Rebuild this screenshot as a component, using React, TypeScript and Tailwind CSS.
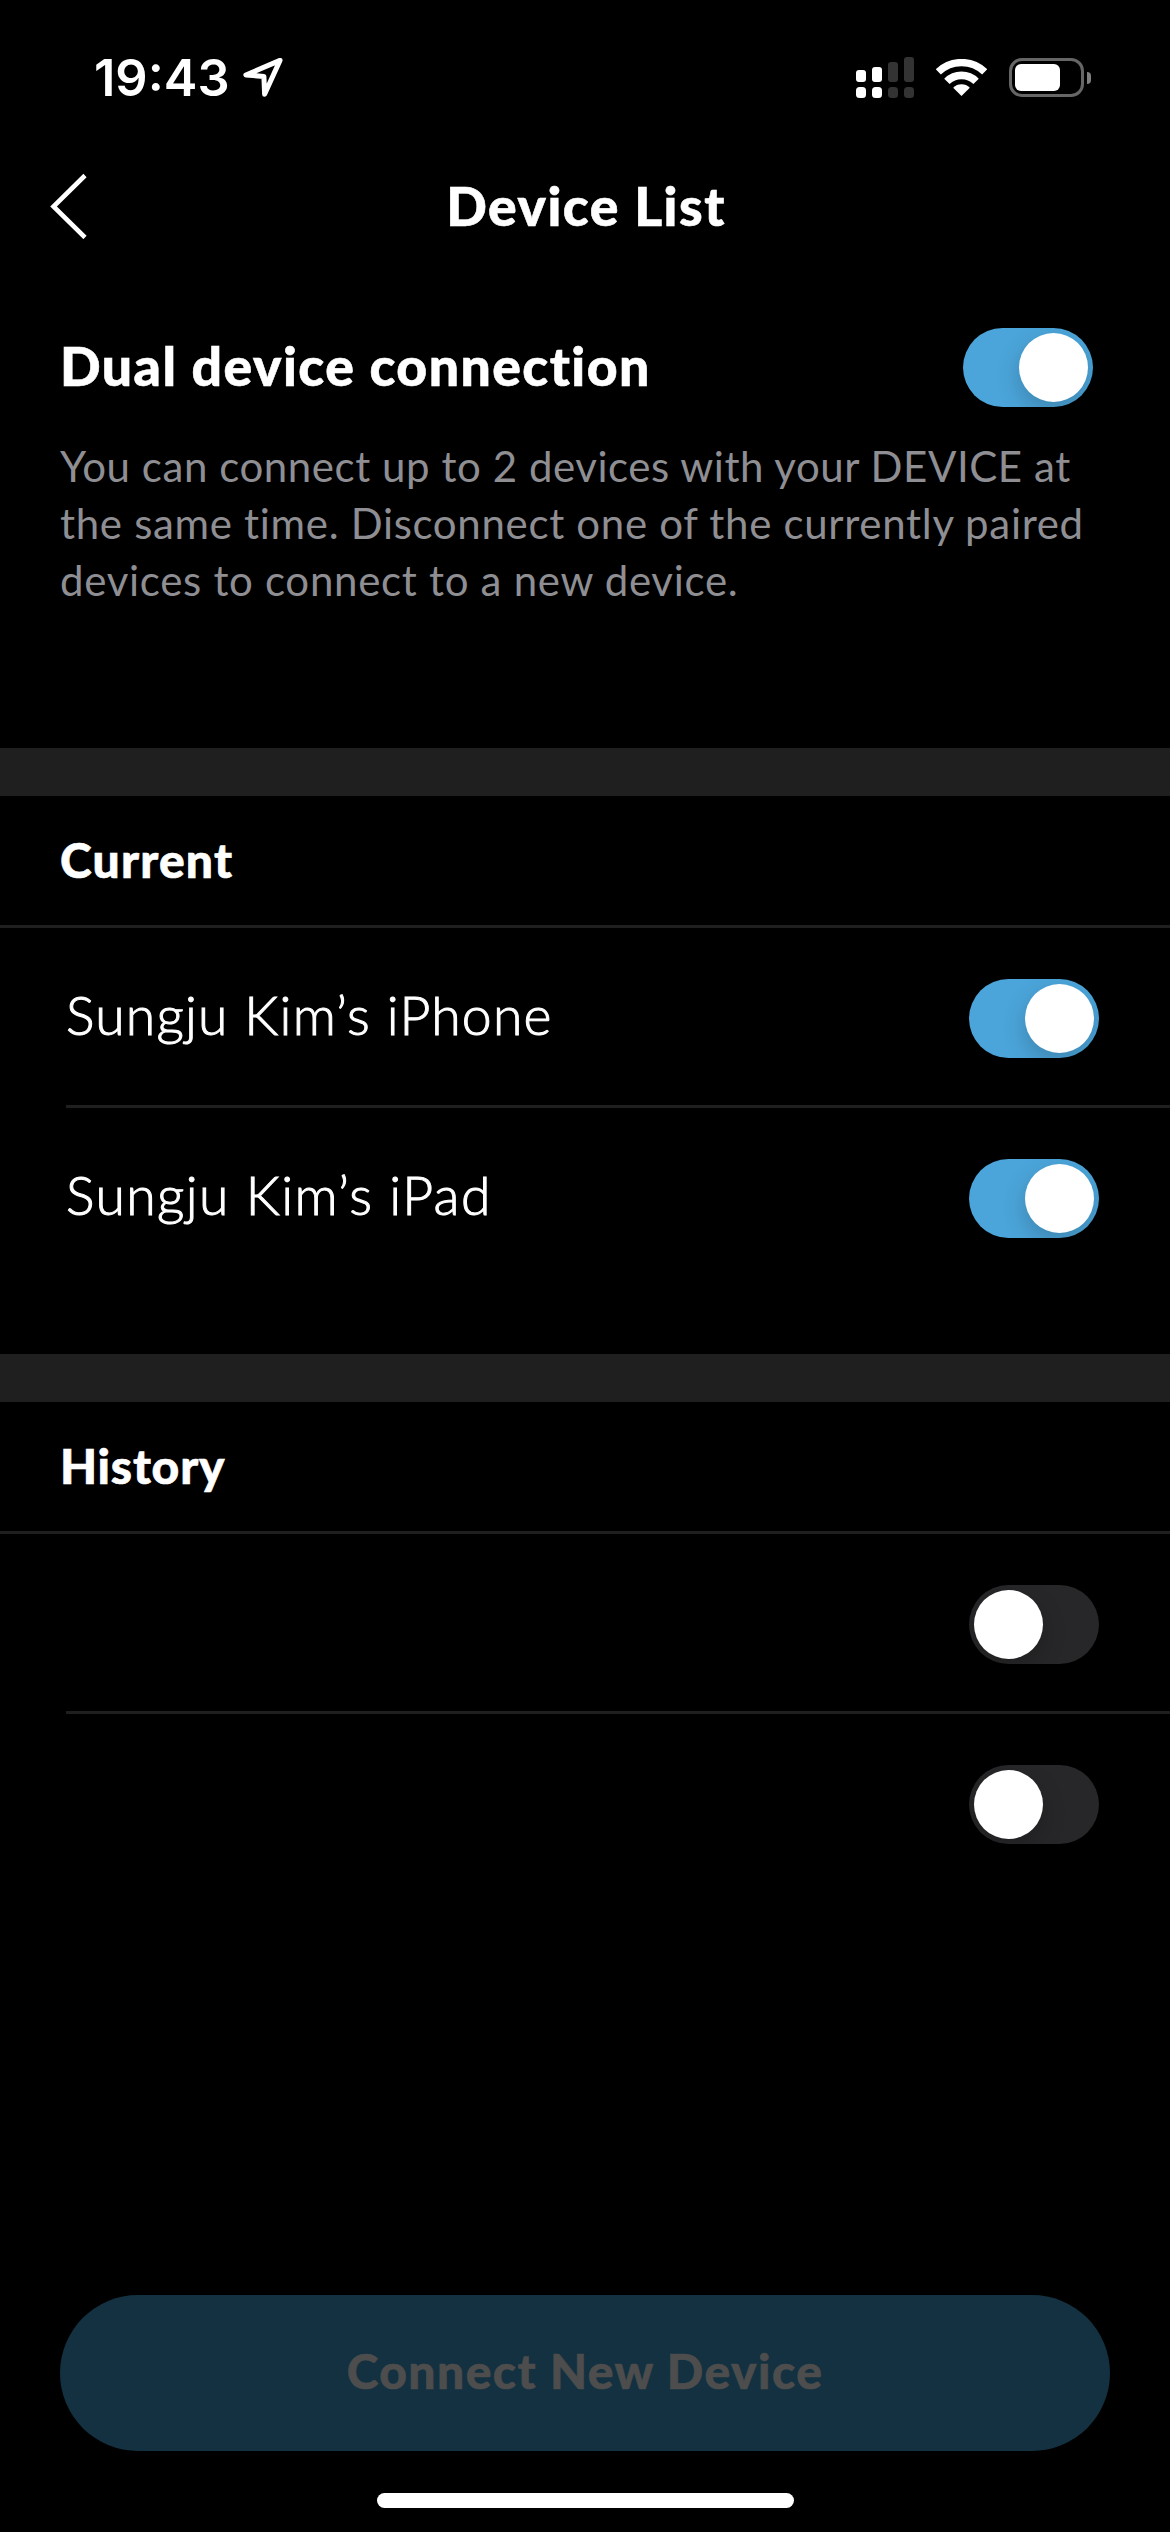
import React, { useState } from 'react';

const currentDevices = [
  { name: 'Sungju Kim’s iPhone', on: true, tracking: 'tracking-[1.2px]', id: 'iphone' },
  { name: 'Sungju Kim’s iPad', on: true, tracking: 'tracking-[1.4px]', id: 'ipad' },
];

const historyDevices = [
  { name: '', on: false, tracking: '', id: 'history-1' },
  { name: '', on: false, tracking: '', id: 'history-2' },
];

function Toggle({ initial }: { initial: boolean }) {
  const [on, setOn] = useState(initial);
  return (
    <button
      role="switch"
      aria-checked={on}
      onClick={() => setOn(!on)}
      className={`flex items-center shrink-0 w-[130px] h-[79px] p-[5px] rounded-full overflow-hidden ${on ? 'justify-end bg-[#4ba5da]' : 'justify-start bg-[#272729]'}`}
    >
      <span className="size-[69px] rounded-full bg-white shadow-[0_9px_24px_rgba(0,0,0,0.2)]" />
    </button>
  );
}

function StatusBar() {
  return (
    <div className="flex items-center justify-between h-[132px] pt-[23px] pl-[94px] pr-[79px]">
      <div className="flex items-center gap-[13px]">
        <span className="font-['Inter',sans-serif] text-[50.5px] leading-none font-semibold pt-px">19:43</span>
        <svg width="41" height="41" viewBox="0 0 41 41" fill="none" stroke="white" strokeWidth="5" strokeLinejoin="round">
          <path d="M37 3.4 L2.9 18 L20.9 19.4 L21.6 37.3 Z" />
        </svg>
      </div>
      <div className="flex items-center">
        <div className="flex items-end gap-1.5 mr-[22px]">
          {[
            { bar: 'h-3', color: 'bg-white' },
            { bar: 'h-[15px]', color: 'bg-white' },
            { bar: 'h-5', color: 'bg-[#333333]' },
            { bar: 'h-[25px]', color: 'bg-[#333333]' },
          ].map((item, i) => (
            <div key={i} className="flex flex-col gap-[5px]">
              <span className={`w-2.5 rounded-[3px] ${item.bar} ${item.color}`} />
              <span className={`w-2.5 h-[11px] rounded-[3.5px] ${item.color}`} />
            </div>
          ))}
        </div>
        <svg width="51" height="37" viewBox="0 0 51 37" fill="none" stroke="white">
          <path d="M2.3 12.9 A33.5 33.5 0 0 1 48.7 12.9" strokeWidth="7.4" />
          <path d="M10.9 22.4 A20.7 20.7 0 0 1 40.1 22.4" strokeWidth="7.6" />
          <path d="M25.5 37 L17.2 28.7 A11.7 11.7 0 0 1 33.8 28.7 Z" fill="white" stroke="none" />
        </svg>
        <div className="flex items-center gap-[3px] ml-[22px]">
          <div className="w-[75px] h-[39px] p-[3px] rounded-[13px] border-[3px] border-[#666666]">
            <div className="w-[45px] h-[27px] rounded-[6px] bg-white" />
          </div>
          <span className="w-1 h-3 rounded-r-full bg-[#808080]" />
        </div>
      </div>
    </div>
  );
}

function DeviceSection({ title, tracking, devices }: { title: string; tracking: string; devices: typeof currentDevices }) {
  return (
    <section className="border-t-[48px] border-[#1f1f1f]">
      <div className="flex items-center h-[132px] pb-px pl-[60px] border-b-[3px] border-[#1f1f1f]">
        <h2 className={`text-[48px] leading-none font-black [-webkit-text-stroke:0.6px_white] ${tracking}`}>{title}</h2>
      </div>
      {devices.map((device, i) => (
        <div key={device.id} className="pl-[66px]">
          <div className={`flex items-center justify-between h-[180px] pr-[71px] ${i < devices.length - 1 ? 'border-b-[3px] border-[#1f1f1f]' : 'pb-[3px]'}`}>
            <span className={`text-[53.5px] leading-none font-light pb-[3px] [-webkit-text-stroke:1px_white] ${device.tracking}`}>
              {device.name}
            </span>
            <div className="pt-1">
              <Toggle initial={device.on} />
            </div>
          </div>
        </div>
      ))}
    </section>
  );
}

export default function App() {
  return (
    <div className="flex flex-col w-[1170px] h-[2532px] overflow-hidden bg-black text-white font-['Lato',sans-serif]">
      <StatusBar />

      <header className="grid grid-cols-[1fr_auto_1fr] items-center h-[148px] pl-[50px] pr-[48px]">
        <button aria-label="Back">
          <svg width="38" height="66" viewBox="0 0 38 66" fill="none" stroke="white" strokeWidth="4.6">
            <path d="M35 2.5 L3.5 33.5 L35 64.5" />
          </svg>
        </button>
        <h1 className="text-[53.5px] leading-none font-black tracking-[1.5px] [-webkit-text-stroke:0.6px_white]">Device List</h1>
      </header>

      <div className="h-[468px] pt-12 pl-[60px] pr-[77px]">
        <div className="flex items-center justify-between">
          <h2 className="text-[53.5px] leading-none font-black tracking-[1.45px] pb-[3px] [-webkit-text-stroke:0.6px_white]">Dual device connection</h2>
          <Toggle initial={true} />
        </div>
        <p className="mt-[31px] text-[42px] leading-[57px] text-[#8e8e93] whitespace-nowrap">
          <span className="block tracking-[0.56px]">You can connect up to 2 devices with your DEVICE at</span>
          <span className="block tracking-[0.68px]">the same time. Disconnect one of the currently paired</span>
          <span className="block tracking-[0.7px]">devices to connect to a new device.</span>
        </p>
      </div>

      <DeviceSection title="Current" tracking="tracking-[1.2px]" devices={currentDevices} />
      <div className="h-[66px]" />
      <DeviceSection title="History" tracking="tracking-[0.8px]" devices={historyDevices} />

      <footer className="mt-auto flex flex-col items-center px-[60px] pb-6">
        <button className="w-full h-[156px] pb-[5px] rounded-full bg-[#133140] text-[#4d4d4d] text-[48px] leading-none font-black tracking-[1.45px] [-webkit-text-stroke:0.6px_#4d4d4d]">
          Connect New Device
        </button>
        <div className="mt-[42px] w-[417px] h-[15px] rounded-full bg-white" />
      </footer>
    </div>
  );
}
